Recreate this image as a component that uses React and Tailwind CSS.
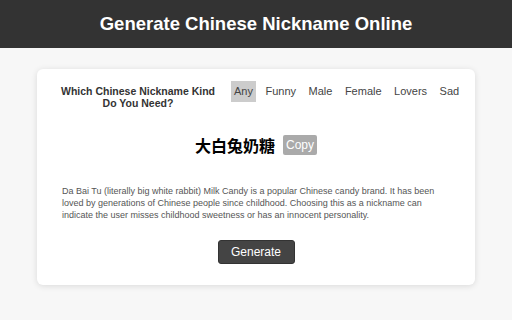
import React from 'react';

const kinds = ["Any", "Funny", "Male", "Female", "Lovers", "Sad"];

const App = () => {
  return (
    <div className="min-h-[320px] bg-[#f7f7f7] font-['Liberation_Sans',Arial,sans-serif]">
      {/* Header */}
      <div className="h-[48px] bg-[#333333] flex items-center justify-center">
        <h1 className="text-white font-bold text-[18.5px]">Generate Chinese Nickname Online</h1>
      </div>

      {/* Card */}
      <div className="px-[37px] pt-[21px]">
        <div className="bg-white rounded-md shadow-[0_1px_6px_rgba(0,0,0,0.12)] h-[216px] flex flex-col items-center">
          <div className="flex items-start mt-[16px] w-full pl-[22px]">
            <div className="w-[158px] text-center font-bold text-[10.5px] leading-[12px] text-[#333] whitespace-nowrap">
              Which Chinese Nickname Kind<br />Do You Need?
            </div>
            <div className="flex items-center gap-[12.5px] ml-[17px] -mt-[4px] text-[11px] text-[#444]">
              {kinds.map((k, i) => (
                <span key={i} className={i === 0 ? "bg-[#cccccc] px-[3px] py-[2px] -mx-[3px]" : "py-[2px]"}>
                  {k}
                </span>
              ))}
            </div>
          </div>

          <div className="flex items-center gap-[8px] mt-[24px]">
            <span className="font-bold text-[16px] text-black font-['Noto_Sans_CJK_SC',sans-serif]">大白兔奶糖</span>
            <span className="bg-[#aaaaaa] text-white text-[12px] px-[3px] py-[1px] rounded-[2px]">Copy</span>
          </div>

          <p className="mt-[28px] px-[25px] text-[9px] leading-[12px] text-[#555] self-start">
            Da Bai Tu (literally big white rabbit) Milk Candy is a popular Chinese candy brand. It has been loved by generations of Chinese people since childhood. Choosing this as a nickname can indicate the user misses childhood sweetness or has an innocent personality.
          </p>

          <button className="mt-[19px] bg-[#444444] text-white text-[12px] w-[77px] h-[24px] rounded-[3px] border border-[#333]">
            Generate
          </button>
        </div>
      </div>
    </div>
  );
};

export default App;
